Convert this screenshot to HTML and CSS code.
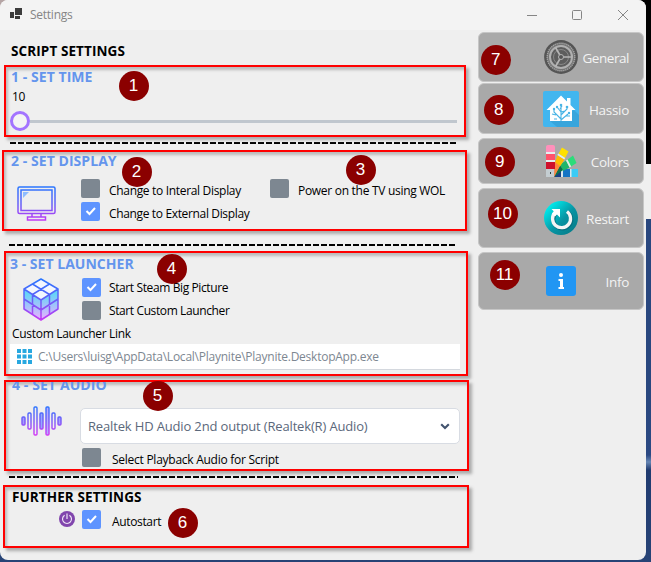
FILE: index.html
```html
<!DOCTYPE html>
<html lang="en">
<head>
<meta charset="utf-8">
<title>Settings</title>
<link rel="stylesheet" href="styles.css">
</head>
<body>
<div class="window">
  <header class="titlebar">
    <svg class="app-icon" width="13" height="12" viewBox="0 0 13 12" shape-rendering="crispEdges"><path fill="#3c3c3c" d="M5 0h7v7H5zM0 4h4v6H0zM5 8h5v3H5z"/></svg>
    <span class="title">Settings</span>
    <svg class="controls" width="102" height="12" viewBox="0 0 102 12" fill="none" stroke="#858585" stroke-width="1"><path d="M0 6.500h10"/><rect x="45.500" y="1.500" width="9" height="9" rx="1"/><path d="M91 1l10 10M101 1L91 11"/></svg>
  </header>
  <div class="content">
    <main class="settings">
      <h1>SCRIPT SETTINGS</h1>
      <section class="group time">
        <h2>1 - SET TIME</h2>
        <div class="value">10</div>
        <div class="slider"><span class="thumb"></span><span class="track"></span></div>
        <b class="badge b1">1</b>
      </section>
      <div class="divider d1"></div>
      <section class="group display">
        <h2>2 - SET DISPLAY</h2>
        <div class="row">
          <svg class="icon" width="40" height="36" viewBox="0 0 40 36" fill="none">
            <defs><linearGradient id="g" gradientUnits="userSpaceOnUse" x1="0" y1="0" x2="0" y2="36"><stop stop-color="#2877ff"/><stop offset=".5" stop-color="#6560f8"/><stop offset="1" stop-color="#c936f5"/></linearGradient></defs>
            <path d="M6 6h6l-6 6z" fill="#8ebcff"/><g stroke="url(#g)" stroke-width="1.500"><rect x="1" y="1" width="37" height="26.500" rx="1.500"/><rect x="4" y="4" width="31" height="20.500"/><path d="M15 28v3h9v-3M10.500 31h18v3h-18z"/></g></svg>
          <div class="options">
            <div class="option"><span class="check"></span><span class="label l-int">Change to Interal Display</span></div>
            <div class="option"><span class="check on"><svg width="19" height="19" viewBox="0 0 19 19"><path d="M5.500 9l3 3 5.500-6"/></svg></span><span class="label l-ext">Change to External Display</span></div>
          </div>
          <div class="option"><span class="check"></span><span class="label l-tv">Power on the TV using WOL</span></div>
        </div>
        <b class="badge b2">2</b><b class="badge b3">3</b>
      </section>
      <div class="divider d2"></div>
      <section class="group launcher">
        <h2>3 - SET LAUNCHER</h2>
        <div class="row">
          <svg class="icon" width="36" height="43" viewBox="0 0 36 43"><defs><linearGradient id="c" gradientUnits="userSpaceOnUse" x1="0" y1="0" x2="0" y2="43"><stop stop-color="#2877ff"/><stop offset=".5" stop-color="#6560f8"/><stop offset="1" stop-color="#c936f5"/></linearGradient><linearGradient id="f" gradientUnits="userSpaceOnUse" x1="0" y1="11" x2="0" y2="42"><stop offset=".15" stop-color="#65d4f7"/><stop offset="1" stop-color="#edafff"/></linearGradient></defs><path fill="#f3f7ff" d="M18 1l17 10-17 11L1 11z"/><path fill="url(#f)" d="M1 11l17 11 17-11v20L18 42 1 31z"/><path fill="none" stroke="url(#c)" stroke-width="1.500" stroke-linejoin="round" d="M18 1l17 10v20L18 42 1 31V11zM1 11l17 11 17-11M18 22v20M9.500 6l17 10.500v20M26.500 6l-17 10.500v20M1 21l17 11 17-11"/></svg>
          <div class="options">
            <div class="option"><span class="check on"><svg width="19" height="19" viewBox="0 0 19 19"><path d="M5.500 9l3 3 5.500-6"/></svg></span><span class="label l-steam">Start Steam Big Picture</span></div>
            <div class="option"><span class="check"></span><span class="label l-custom">Start Custom Launcher</span></div>
          </div>
        </div>
        <div class="caption"><span class="l-link">Custom Launcher Link</span></div>
        <div class="field"><svg width="15" height="15" viewBox="0 0 15 15" fill="#28a8e0"><path d="M0 0h4v4H0zM5.500 0h4v4h-4zM11 0h4v4h-4zM0 5.500h4v4H0zM5.500 5.500h4v4h-4zM11 5.500h4v4h-4zM0 11h4v4H0zM5.500 11h4v4h-4zM11 11h4v4h-4z"/></svg><span class="path">C:\Users\luisg\AppData\Local\Playnite\Playnite.DesktopApp.exe</span></div>
        <b class="badge b4">4</b>
      </section>
      <section class="group audio">
        <div class="clip"><h2>4 - SET AUDIO</h2></div>
        <div class="row">
          <svg class="icon" width="41" height="30" viewBox="0 0 41 30" stroke-width="1.400"><defs><linearGradient id="a" gradientUnits="userSpaceOnUse" x1="0" y1="0" x2="0" y2="30"><stop stop-color="#2877ff"/><stop offset=".5" stop-color="#7658f8"/><stop offset="1" stop-color="#d936f5"/></linearGradient></defs><g fill="none" stroke="url(#a)"><rect x="1" y="11" width="3" height="8" rx="1" fill="#a59cff"/><rect x="7" y="7" width="3" height="16" rx="1"/><rect x="13" y="1" width="3" height="28" rx="1"/><rect x="19" y="7" width="3" height="16" rx="1" fill="#94a8ff"/><rect x="25" y="1" width="3" height="28" rx="1" fill="#b6aaff"/><rect x="31" y="7" width="3" height="16" rx="1"/><rect x="37" y="11" width="3" height="8" rx="1" fill="#a59cff"/></g></svg>
          <div class="select"><span class="l-device">Realtek HD Audio 2nd output (Realtek(R) Audio)</span><svg width="10" height="7" viewBox="0 0 10 7"><path d="M1.200 1.200L5 5l3.800-3.800" fill="none" stroke="#42536e" stroke-width="2.100"/></svg></div>
        </div>
        <div class="option"><span class="check"></span><span class="label l-play">Select Playback Audio for Script</span></div>
        <b class="badge b5">5</b>
      </section>
      <div class="divider d3"></div>
      <section class="group further">
        <h1>FURTHER SETTINGS</h1>
        <div class="option"><svg class="power" width="16" height="16" viewBox="0 0 16 16"><circle cx="8" cy="8" r="8" fill="#8146ad"/><path d="M5.600 4.200a4.500 4.500 0 1 0 4.800 0M8 2.500V8" fill="none" stroke="#eee5f5" stroke-width="1.200"/></svg><span class="check on"><svg width="19" height="19" viewBox="0 0 19 19"><path d="M5.500 9l3 3 5.500-6"/></svg></span><span class="label l-auto">Autostart</span></div>
        <b class="badge b6">6</b>
      </section>
    </main>
    <nav class="sidebar">
      <div class="tab general"><svg width="34" height="34" viewBox="0 0 34 34" fill="none"><circle cx="17" cy="17" r="16.900" fill="#555"/><circle cx="17" cy="17" r="13.800" fill="#747474" stroke="#a5a5a5" stroke-width="1.400" stroke-dasharray="1.300 .7"/><circle cx="17" cy="17" r="11" fill="#5d5d5d" stroke="#b0b0b0" stroke-width="2"/><circle cx="17" cy="17" r="7.500" stroke="#888" stroke-width="1"/><path d="M17 17h11M17 17l-5.500-9.500M17 17l-5.500 9.500" stroke="#b5b5b5" stroke-width="1.700"/><circle cx="17" cy="17" r="2.500" fill="#555" stroke="#b5b5b5" stroke-width="1"/></svg><span>General</span><b class="badge b7">7</b></div>
      <div class="tab hassio"><svg width="36" height="36" viewBox="0 0 36 36"><rect width="36" height="36" rx="2" fill="#42b6ef"/><path d="M31 19l5 5v12H14l-7-6z" fill="#38a5dc"/><path fill="#fff" d="M18 4.500L3.500 19H7v11h22V19h3.500L27.500 14V7H24v3.500z"/><path d="M18 30V14m0 14l-7-7v-3m7 6l6-6v-3m-6 14l7-6m-7-2l-4-5m-5 7l4 1m5-3l4-1m1 5h4m-10-7l2-3m-5 13h-3" stroke="#48b4e5" stroke-width="1.100" fill="none"/><g fill="#48b4e5"><circle cx="18" cy="14" r="1.300"/><circle cx="11" cy="18" r="1.200"/><circle cx="24" cy="16" r="1.300"/><circle cx="14" cy="16" r="1.200"/><circle cx="26" cy="22" r="1.200"/></g></svg><span>Hassio</span><b class="badge b8">8</b></div>
      <div class="tab colors"><svg width="32" height="32" viewBox="0 0 32 32"><path fill="#3acbf5" d="M25 24h7v8h-7z"/><path fill="#1474c4" d="M17 24h7v8h-7z"/><path fill="#173e82" d="M8 32l7-8v8z"/><path fill="#d9e8ee" d="M15 24h2v8h-2zM24 24h1.500v8H24z"/><path fill="#2bdd7a" d="M21 15l6-4.500L30.500 18 25 21.500z"/><path fill="#20b669" d="M14 19.500l6-4 3.500 7L17 26z"/><path fill="#0d714b" d="M8 32l6-12 3 5z"/><path fill="#dff2e5" d="M20 15.500l1.500-1 3.700 7-1.600 1z"/><path fill="#ffe000" d="M16 2.500L22.500 6.500 19 13l-6.500-4.500z"/><path fill="#ffbc00" d="M11.500 10l7 4.500-4.500 7-5-4z"/><path fill="#ff863c" d="M9 17l5 4-6 11z"/><path fill="#e5edf0" d="M12.300 8.500l7 4.500-1 1.500-7-4.500z"/><path fill="#ff90bb" d="M0 2q0-2 2-2h5q2 0 2 2v6H0z"/><path fill="#e6eef0" d="M0 7h9v2H0zM0 15h9v2H0z"/><path fill="#ff526b" d="M0 9h9v6H0z"/><path fill="#cf102b" d="M0 17h9v7H0z"/><path fill="#c4cdd1" d="M0 24h8v8H0z"/><path fill="#2a4040" d="M4 27h1v2H4z"/></svg><span>Colors</span><b class="badge b9">9</b></div>
      <div class="tab restart"><svg width="34" height="34" viewBox="0 0 34 34"><defs><linearGradient id="r" x1="0" y1="0" x2="1" y2="1"><stop offset=".12" stop-color="#00f0f0"/><stop offset=".55" stop-color="#0794a3"/><stop offset="1" stop-color="#067783"/></linearGradient></defs><circle cx="17" cy="17" r="17" fill="url(#r)"/><path d="M23 10.500a9 9 0 1 1-12 1" stroke="#087080" stroke-width="4" fill="none" transform="translate(.8 .8)"/><path d="M23 10.500a9 9 0 1 1-12 1" stroke="#f5f5f5" stroke-width="3.300" fill="none"/><path fill="#fff" d="M7.500 8H16v8.500l-3-3-2 2-3-3 2-2z"/></svg><span>Restart</span><b class="badge b10">10</b></div>
      <div class="tab info"><svg width="30" height="30" viewBox="0 0 30 30"><rect width="30" height="30" rx="3" fill="#2196f3"/><circle cx="15" cy="9" r="2" fill="#fff"/><path fill="#fff" d="M12.500 13H17v8h1v2h-5.500v-2H14v-6h-1.500z"/></svg><span>Info</span><b class="badge b11">11</b></div>
    </nav>
  </div>
</div>
</body>
</html>
```
FILE: styles.css
```css
* { box-sizing: border-box; }
body {
  margin: 0;
  width: 651px;
  height: 562px;
  overflow: hidden;
  background: linear-gradient(to right, #b5a5a5 0 20px, transparent 20px) 0 0 / 100% 20px no-repeat,
    linear-gradient(#000 0 164px, #efefef 164px 219px, #29477f 219px 400px, #2b4983 455px, #6686b4 462px, #203b70 470px, #274376 562px);
  font: 12px/16px "Open Sans", "Noto Sans", sans-serif;
  color: #000;
}
.window { width: 646px; height: 560px; border-radius: 8px; overflow: hidden; background: #efefef; }
.titlebar { height: 30px; display: flex; align-items: center; padding: 0 17px 0 10px; background: #f3f3f3; }
.app-icon { margin-top: -2px; }
.title { margin-left: 7px; color: #858585; font-size: 12px; letter-spacing: -.25px; }
.controls { margin: -1px 0 0 auto; }
.content { display: flex; justify-content: space-between; }
.settings { width: 470px; }
h1, h2 { margin: 0; font-size: 14px; line-height: 18px; font-weight: 700; white-space: nowrap; }
h1 { font-size: 13.5px; letter-spacing: .1px; }
h2 { color: #6495ed; letter-spacing: .05px; }
.settings > h1 { height: 35px; padding: 12px 0 0 11px; }
.group { position: relative; border: 2px solid #f00; box-shadow: 3px 3px 3px #aaa, inset 2px 3px 3px #bbb; }
.time { width: 462px; height: 72px; margin-left: 4px; padding: 1px 7px 0 5px; }
.value { padding-left: 1px; margin-top: 3px; height: 22px; letter-spacing: -.4px; }
.slider { display: flex; align-items: center; height: 20px; margin-left: -1px; }
.thumb { width: 20px; height: 20px; border: 3px solid #a374ff; border-radius: 50%; background: #f4f4f4; }
.track { height: 3px; flex: 1; background: #c0c7ce; }
.divider { height: 2px; background: repeating-linear-gradient(to right, #000 0 6px, transparent 6px 8px); }
.d1 { width: 446px; margin: 5px 0 6px 10px; }
.d2 { width: 446px; margin: 13px 0 5px 9px; }
.d3 { width: 449px; margin: 5px 0 7px 9px; }
.display { width: 465px; height: 81px; margin-left: 2px; padding-left: 7px; }
.row { display: flex; align-items: flex-start; }
.icon { flex: none; }
.option { display: flex; align-items: flex-start; white-space: nowrap; }
.check { flex: none; width: 19px; height: 19px; border-radius: 2px; background: #7d8791; }
.check.on { background: #5e94ff; }
.check svg { display: block; fill: none; stroke: #fff; stroke-width: 2; }
.label { margin: 4px 0 0 9px; }
.l-int { letter-spacing: -.32px; }
.l-ext { letter-spacing: -.35px; }
.l-tv { letter-spacing: -.29px; }
.l-steam, .l-custom { letter-spacing: -.39px; }
.l-link { letter-spacing: -.3px; }
.l-device { letter-spacing: -.155px; }
.l-play { letter-spacing: -.26px; }
.l-auto { letter-spacing: -.35px; }
.display .row { margin-top: 9px; }
.display .icon { margin: 7px 0 0 6px; }
.display .options { width: 189px; margin-left: 24px; }
.options .option { height: 23px; }
.launcher { width: 464px; height: 125px; margin-left: 4px; padding: 2px 6px 0 4px; }
.launcher h2 { letter-spacing: .02px; }
.launcher .row { margin-top: 5px; height: 46px; }
.launcher .icon { margin-left: 13px; }
.launcher .options { margin-left: 23px; }
.launcher .label { margin: 2px 0 0 8px; }
.caption { margin: 2px 0 0 2px; height: 17px; }
.field { display: flex; align-items: center; height: 26px; padding: 0 0 0 7px; background: #fff; border-bottom: 1px solid #d4d8de; white-space: nowrap; margin-top: 1px; }
.path { margin-left: 6px; color: #7d8791; letter-spacing: -.24px; }
.audio { width: 465px; height: 91px; margin: 4px 0 0 4px; padding-left: 6px; }
.clip { height: 10px; overflow: hidden; }
.clip h2 { margin-top: -6px; letter-spacing: .1px; }
.audio .row { margin-top: 16px; }
.audio .icon { margin: -2px 0 0 9px; }
.select { display: flex; align-items: center; justify-content: space-between; width: 380px; height: 36px; margin-left: 18px; padding: 0 9px 0 7px; background: #fff; border: 1px solid #d8dce3; border-radius: 5px; color: #5b687b; font-size: 13px; white-space: nowrap; }
.audio > .option { margin: 4px 0 0 70px; }
.audio > .option .label { margin: 4px 0 0 11px; }
.further { width: 466px; height: 63px; margin-left: 3px; padding: 1px 0 0 7px; }
.further .option { margin: 4px 0 0 47px; }
.power { margin: 1px 7px 0 0; }
.further .label { margin: 4px 0 0 11px; }
.badge { position: absolute; width: 30px; height: 30px; border-radius: 50%; background: #8b0000; color: #fff; font: 17px/30px "Liberation Sans", sans-serif; text-align: center; }
.b1 { left: 112.500px; top: 3.500px; }
.b2 { left: 117.500px; top: 4.500px; }
.b3 { left: 341.500px; top: 2.500px; }
.b4 { left: 150.500px; top: .5px; }
.b5 { left: 136.500px; top: -1.500px; }
.b6 { left: 162.500px; top: 20.500px; }
.sidebar { width: 166px; margin: 2px 2px 0 0; }
.tab { position: relative; display: flex; align-items: center; padding: 0 14px 0 65px; background: #a9a9a9; border: 1px solid #c6c6c6; border-radius: 6px; color: #f3f3f3; font-size: 13.5px; letter-spacing: -.3px; }
.tab span { margin: 2px 0 0 auto; white-space: nowrap; }
.general { height: 50px; margin-bottom: 1px; }
.general span { letter-spacing: -.45px; }
.hassio { height: 51px; margin-bottom: 4px; padding-left: 64px; }
.colors { height: 46px; margin-bottom: 4px; padding-left: 67px; }
.restart { height: 60px; margin-bottom: 4px; }
.info { height: 58px; padding-left: 67px; }
.b7 { left: 1.500px; top: 11.500px; }
.b8 { left: 4.500px; top: 10.500px; }
.b9 { left: 5.500px; top: 7.500px; }
.b10 { left: 8.500px; top: 9.500px; letter-spacing: 0; }
.b11 { left: 10.500px; top: 6.500px; letter-spacing: 0; }
```
